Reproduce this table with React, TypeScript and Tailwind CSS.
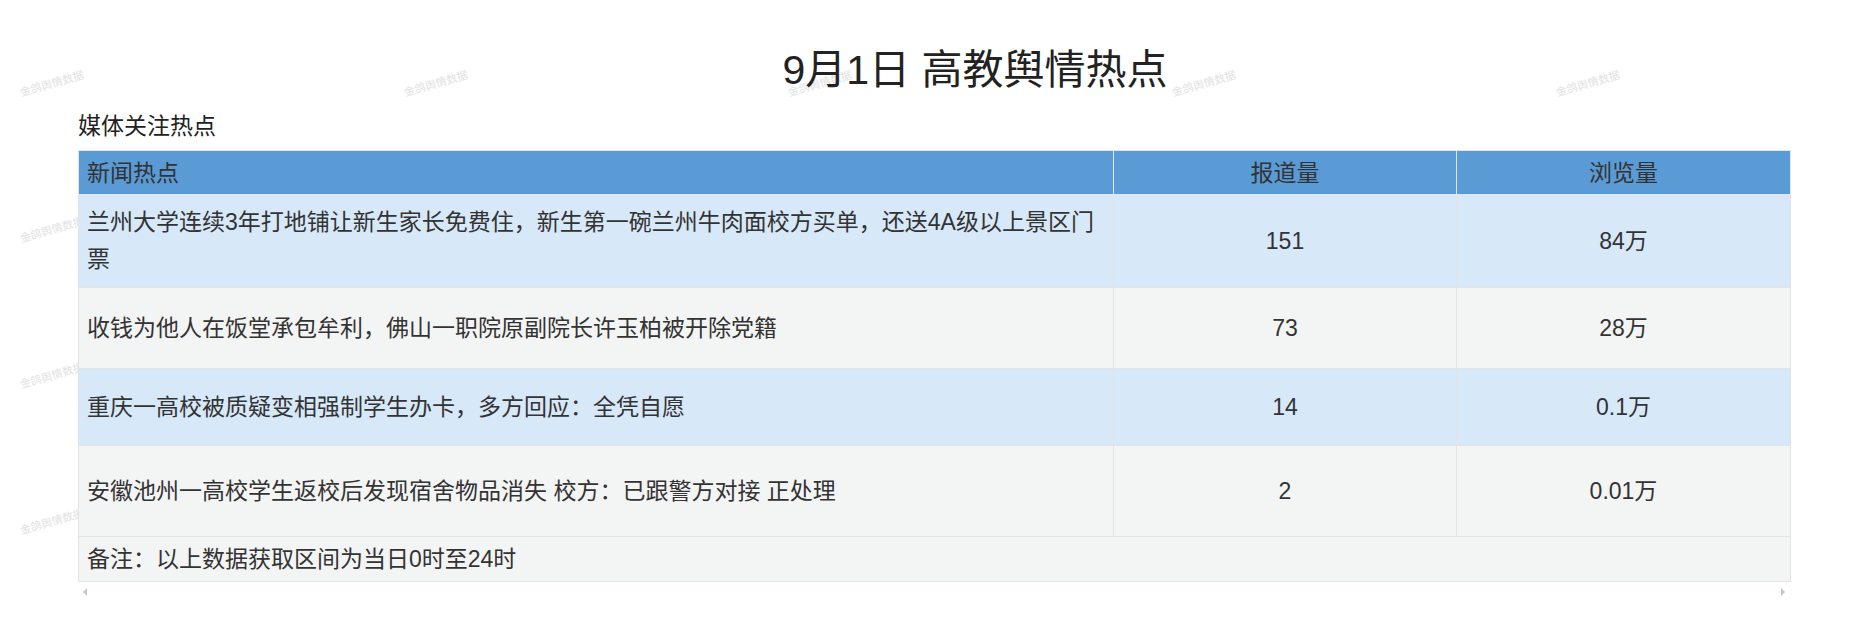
import React from "react";

const rows = [
  {
    title:
      "兰州大学连续3年打地铺让新生家长免费住，新生第一碗兰州牛肉面校方买单，还送4A级以上景区门票",
    count: "151",
    views: "84万",
    bg: "bg-[#d7e8f9]",
    h: "h-[93px]",
  },
  {
    title: "收钱为他人在饭堂承包牟利，佛山一职院原副院长许玉柏被开除党籍",
    count: "73",
    views: "28万",
    bg: "bg-[#f3f4f4]",
    h: "h-[81px]",
  },
  {
    title: "重庆一高校被质疑变相强制学生办卡，多方回应：全凭自愿",
    count: "14",
    views: "0.1万",
    bg: "bg-[#d7e8f9]",
    h: "h-[77px]",
  },
  {
    title: "安徽池州一高校学生返校后发现宿舍物品消失 校方：已跟警方对接 正处理",
    count: "2",
    views: "0.01万",
    bg: "bg-[#f3f4f4]",
    h: "h-[91px]",
  },
];

// only the watermarks that are not fully covered by the table
const marks = [
  { x: 52, y: 84 },
  { x: 436, y: 84 },
  { x: 820, y: 84 },
  { x: 1204, y: 84 },
  { x: 1588, y: 84 },
  { x: 52, y: 230 },
  { x: 52, y: 376 },
  { x: 52, y: 522 },
];

export default function App() {
  return (
    <div className="relative w-full h-[617px] bg-white overflow-hidden text-[#333] font-['Liberation_Sans','Noto_Sans_CJK_SC',sans-serif]">
      {/* watermark layer */}
      <div className="absolute inset-0 z-0 pointer-events-none">
        {marks.map((m) => (
          <div
            key={`${m.x}-${m.y}`}
            className="absolute -translate-x-1/2 -translate-y-1/2 rotate-[-16deg] text-[11px] leading-none whitespace-nowrap text-[#e2e2e2]"
            style={{ left: m.x, top: m.y }}
          >
            金鸽舆情数据
          </div>
        ))}
      </div>

      <div className="relative z-10">
        <div className="h-[100px] pt-[40px] pl-[75px] flex justify-center">
          <h1 className="h-[60px] leading-[60px] text-[41px] font-normal text-[#222]">
            9月1日 高教舆情热点
          </h1>
        </div>
        <div className="mt-[11px] ml-[78px] h-[30px] leading-[30px] text-[23px] text-[#222]">
          媒体关注热点
        </div>

        <table className="mt-[9px] ml-[78px] w-[1712px] table-fixed border-collapse text-[23px]">
          <colgroup>
            <col className="w-[1035px]" />
            <col className="w-[343px]" />
            <col className="w-[334px]" />
          </colgroup>
          <thead>
            <tr className="h-[44px] bg-[#5a9ad5]">
              <th className="border border-[#dfe6ee] px-[8px] text-left font-normal leading-[30px]">
                新闻热点
              </th>
              <th className="border border-[#dfe6ee] px-[8px] text-center font-normal leading-[30px]">
                报道量
              </th>
              <th className="border border-[#dfe6ee] px-[8px] text-center font-normal leading-[30px]">
                浏览量
              </th>
            </tr>
          </thead>
          <tbody>
            {rows.map((r) => (
              <tr key={r.title} className={`${r.bg} ${r.h}`}>
                <td className="border border-[#e3e3e3] px-[8px] leading-[37px] align-middle">
                  {r.title}
                </td>
                <td className="border border-[#e3e3e3] px-[8px] text-center align-middle">
                  {r.count}
                </td>
                <td className="border border-[#e3e3e3] px-[8px] text-center align-middle">
                  {r.views}
                </td>
              </tr>
            ))}
            <tr className="h-[45px] bg-[#f3f4f4]">
              <td colSpan={3} className="border border-[#e3e3e3] px-[8px] align-middle">
                备注：以上数据获取区间为当日0时至24时
              </td>
            </tr>
          </tbody>
        </table>

        <div className="ml-[78px] w-[1712px] mt-[6px] px-[5px] flex justify-between">
          <div className="w-0 h-0 border-y-[4px] border-y-transparent border-r-[4px] border-r-[#c6c6c6]" />
          <div className="w-0 h-0 border-y-[4px] border-y-transparent border-l-[4px] border-l-[#c6c6c6]" />
        </div>
      </div>
    </div>
  );
}
